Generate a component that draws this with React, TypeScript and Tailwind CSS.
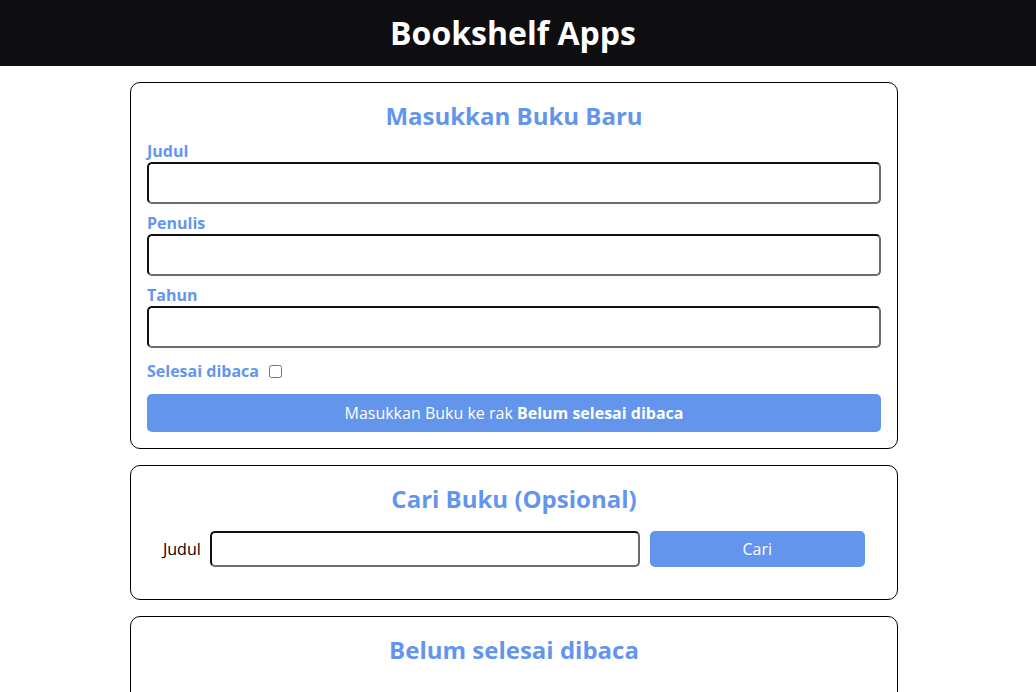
import React from "react";

const inputCls =
  "block w-full h-[42px] px-2 rounded-[5px] border-2 border-t-[#101010] border-l-[#101010] border-r-[#6b6b6b] border-b-[#6b6b6b] bg-white text-base outline-none";

export default function App() {
  return (
    <div className="min-h-screen bg-white text-black" style={{ fontFamily: '"Open Sans", sans-serif' }}>
      <header className="h-[66px] bg-[#0e0e10] flex items-center justify-center pr-[10px]">
        <h1 className="text-[32px] font-bold text-white leading-none">Bookshelf Apps</h1>
      </header>
      <div className="pr-2">
        <main className="w-[768px] mx-auto pt-4 flex flex-col gap-4 pb-8">
          <section className="border border-black rounded-[10px] p-4">
            <h2 className="text-center text-[24px] font-bold text-[#6495ed] leading-[33px] mb-2">Masukkan Buku Baru</h2>
            <form onSubmit={(e) => e.preventDefault()}>
              <div>
                <label className="block text-base font-bold text-[#6495ed] leading-[22px]">Judul</label>
                <input type="text" className={inputCls} />
              </div>
              <div className="mt-2">
                <label className="block text-base font-bold text-[#6495ed] leading-[22px]">Penulis</label>
                <input type="text" className={inputCls} />
              </div>
              <div className="mt-2">
                <label className="block text-base font-bold text-[#6495ed] leading-[22px]">Tahun</label>
                <input type="number" className={inputCls} />
              </div>
              <div className="mt-3 flex items-center h-[22px]">
                <label className="text-base font-bold text-[#6495ed] leading-[22px]">Selesai dibaca</label>
                <input type="checkbox" className="ml-[10px] w-[13px] h-[13px] mt-[1px]" />
              </div>
              <button
                type="submit"
                className="mt-3 w-full h-[38px] bg-[#6495ed] text-white text-base rounded-[5px] leading-[22px]"
              >
                Masukkan Buku ke rak <span className="font-bold">Belum selesai dibaca</span>
              </button>
            </form>
          </section>

          <section className="border border-black rounded-[10px] p-4">
            <h2 className="text-center text-[24px] font-bold text-[#6495ed] leading-[33px]">Cari Buku (Opsional)</h2>
            <form className="p-4 flex items-center" onSubmit={(e) => e.preventDefault()}>
              <label className="text-base leading-[22px] text-black">Judul</label>
              <input
                type="text"
                className="ml-[9px] w-[430px] shrink-0 h-[36px] px-2 rounded-[5px] border-2 border-t-[#101010] border-l-[#101010] border-r-[#6b6b6b] border-b-[#6b6b6b] bg-white outline-none"
              />
              <button type="submit" className="ml-[10px] w-[215px] shrink-0 h-[36px] bg-[#6495ed] text-white text-base rounded-[5px]">
                Cari
              </button>
            </form>
          </section>

          <section className="border border-black rounded-[10px] p-4 min-h-[120px]">
            <h2 className="text-center text-[24px] font-bold text-[#6495ed] leading-[33px]">Belum selesai dibaca</h2>
            <div className="p-4"></div>
          </section>

          <section className="border border-black rounded-[10px] p-4 min-h-[120px]">
            <h2 className="text-center text-[24px] font-bold text-[#6495ed] leading-[33px]">Selesai dibaca</h2>
            <div className="p-4"></div>
          </section>
        </main>
      </div>
    </div>
  );
}
